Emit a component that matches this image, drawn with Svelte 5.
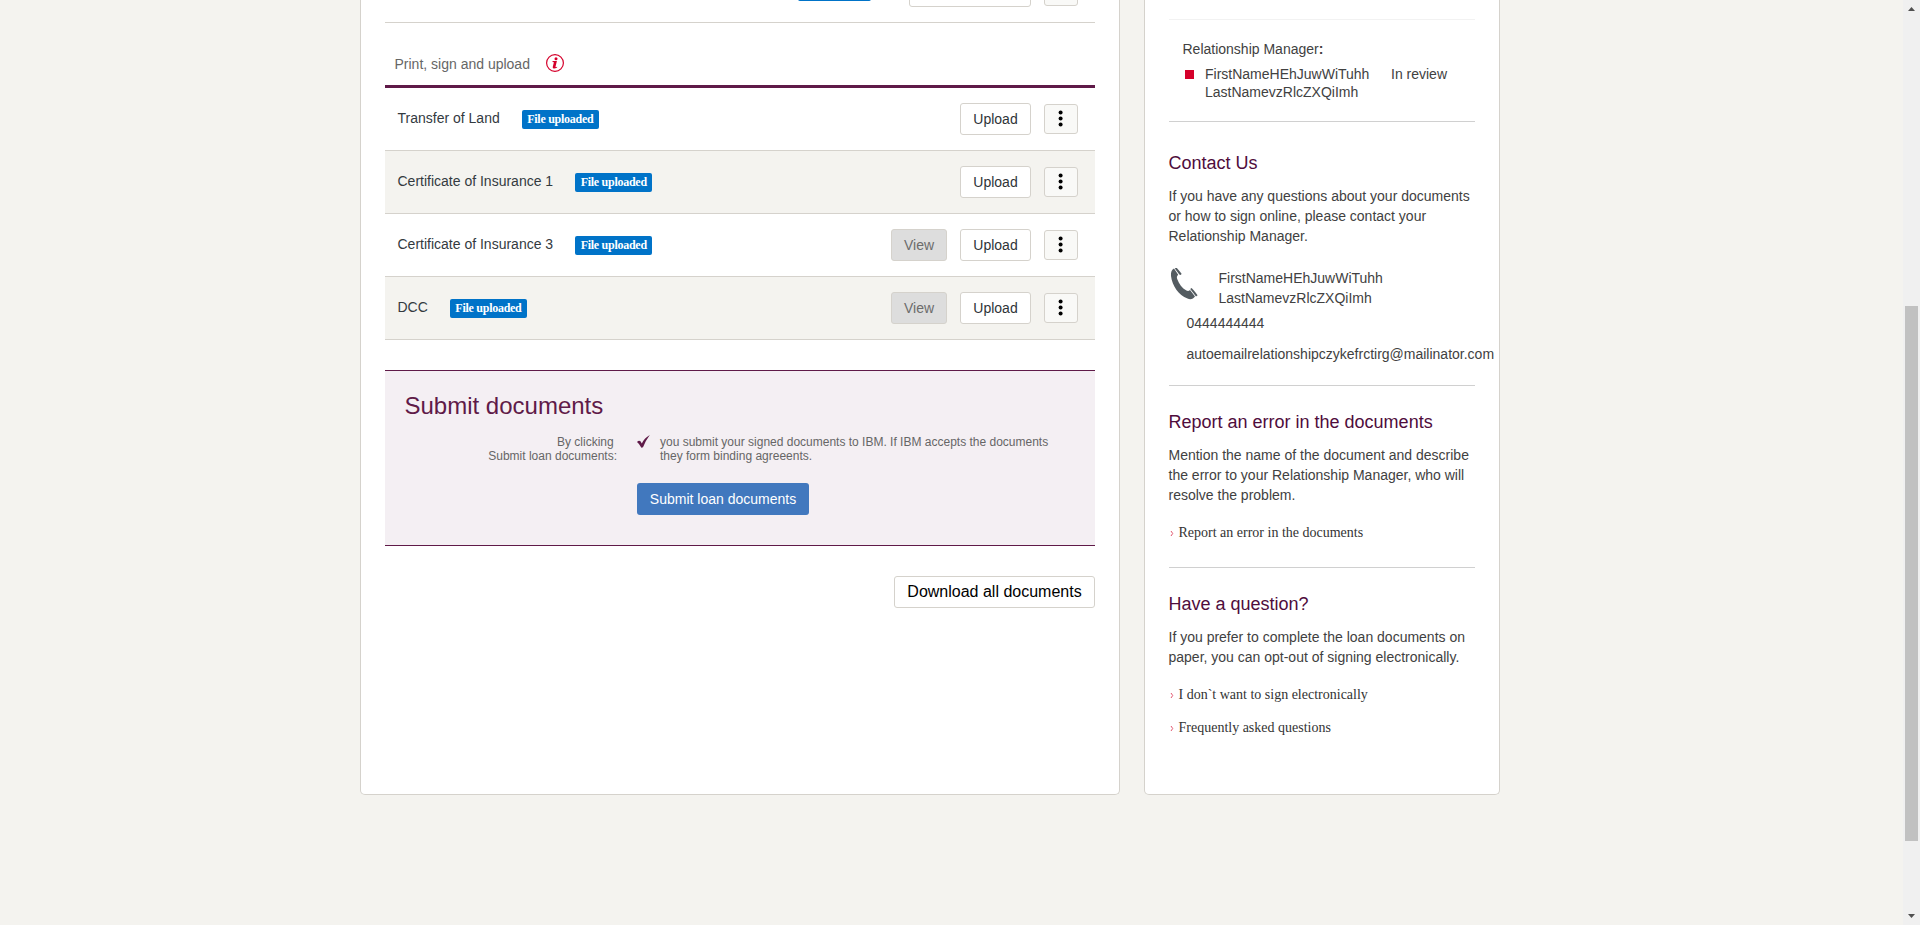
<script>
  const documents = [
    { name: 'Transfer of Land', view: false },
    { name: 'Certificate of Insurance 1', view: false },
    { name: 'Certificate of Insurance 3', view: true },
    { name: 'DCC', view: true }
  ];
</script>

{#snippet more()}
  <button class="more" aria-label="More">
    <svg width="6" height="18" viewBox="0 0 6 18">
      <circle cx="2.6" cy="2.5" r="2" /><circle cx="2.6" cy="8.4" r="2" /><circle cx="2.6" cy="14.4" r="2" />
    </svg>
  </button>
{/snippet}

{#snippet link(label)}
  <a class="link" href="#top">
    <svg width="10" height="20" viewBox="0 0 10 20"><path d="M2 8 L3.7 10.5 L2 13" /></svg><span>{label}</span>
  </a>
{/snippet}

<div class="page">
  <div class="body">
    <main class="panel left">
      <div class="partial">
        <span class="stub"></span>
        <button class="btn wide" aria-label="Sign"></button>
        {@render more()}
      </div>

      <div class="group-title">
        <span>Print, sign and upload</span>
        <svg width="18" height="18" viewBox="0 0 18 18">
          <circle cx="9" cy="9" r="8.4" fill="none" stroke="#d5002b" stroke-width="1.2" />
          <circle cx="10" cy="4.7" r="1.5" fill="#d5002b" />
          <path d="M6.6 7 H10.9 L9.5 12.8 Q9.5 13.5 11.2 12.7 L11.1 13.5 Q9 14.8 7.6 14.5 Q6.4 14.1 6.8 12.7 L7.9 8.2 L6.5 7.9 Z" fill="#d5002b" />
        </svg>
      </div>

      {#each documents as doc, i}
        <div class="row" class:shaded={i % 2 === 1}>
          <span class="name">{doc.name}</span>
          <span class="badge">File uploaded</span>
          <div class="actions">
            {#if doc.view}<button class="btn view">View</button>{/if}
            <button class="btn upload">Upload</button>
            {@render more()}
          </div>
        </div>
      {/each}

      <section class="submit">
        <h2>Submit documents</h2>
        <div class="terms">
          <div class="label">By clicking&nbsp;<br />Submit loan documents:</div>
          <svg width="13" height="14" viewBox="0 0 13 14">
            <path d="M0 7 Q1.8 5 3.5 6.2 L4.8 8.4 Q7.5 3 12.8 0 Q8.6 5.6 6 12.2 L4.4 12.8 Q2.6 9 0 7 Z" fill="#5f1a48" />
          </svg>
          <div class="note">you submit your signed documents to IBM. If IBM accepts the documents<br />they form binding agreeents.</div>
        </div>
        <button class="primary">Submit loan documents</button>
      </section>

      <button class="btn download">Download all documents</button>
    </main>

    <aside class="panel right">
      <div class="sec top"></div>
      <div class="sec manager">
        <div>Relationship Manager<b>:</b></div>
        <div class="status">
          <i></i>
          <span class="who">FirstNameHEhJuwWiTuhh LastNamevzRlcZXQiImh</span>
          <span>In review</span>
        </div>
      </div>

      <div class="sec contact">
        <h3>Contact Us</h3>
        <p>If you have any questions about your documents or how to sign online, please contact your Relationship Manager.</p>
        <div class="person">
          <svg width="31" height="34" viewBox="-1 1 31 34">
            <path d="M1 9 C0.6 5 2 2.5 4 1.6 L8.2 7.8 C6.8 9.2 6.6 10 7.2 12 C9 17 12 21 16.4 23.6 C18 24.4 19 24 20 23 L25 29.6 C23.4 32 20.5 32.8 17.5 31.6 C8.5 28 2.3 19 1 9 Z" fill="#545c61" />
            <path d="M4.8 1.4 L6.4 0.6 Q8.6 2.8 11.6 6.8 Q11.2 8.6 9.3 7.6 Z" fill="#545c61" />
            <path d="M20.2 21.9 L21.6 21 Q25 24.4 27.6 28.2 L26 29.6 Z" fill="#545c61" />
          </svg>
          <span>FirstNameHEhJuwWiTuhh<br />LastNamevzRlcZXQiImh</span>
        </div>
        <div class="phone">0444444444</div>
        <div class="email">autoemailrelationshipczykefrctirg@mailinator.com</div>
      </div>

      <div class="sec report">
        <h3>Report an error in the documents</h3>
        <p>Mention the name of the document and describe the error to your Relationship Manager, who will resolve the problem.</p>
        {@render link('Report an error in the documents')}
      </div>

      <div class="sec question">
        <h3>Have a question?</h3>
        <p>If you prefer to complete the loan documents on paper, you can opt-out of signing electronically.</p>
        {@render link('I don`t want to sign electronically')}
        {@render link('Frequently asked questions')}
      </div>
    </aside>
  </div>

  <div class="scrollbar">
    <svg width="7" height="4" viewBox="0 0 7 4"><path d="M0 4 L3.5 0 L7 4 Z" /></svg>
    <div class="thumb"></div>
    <svg width="7" height="4" viewBox="0 0 7 4"><path d="M0 0 L3.5 4 L7 0 Z" /></svg>
  </div>
</div>

<style>
  :global(body) { margin: 0; }
  * { box-sizing: border-box; }
  .page {
    display: flex;
    height: 925px;
    overflow: hidden;
    background: #f4f3ef;
    font: 14px/20px "Liberation Sans", Arial, sans-serif;
    color: #414141;
  }
  .body { flex: 1; display: flex; align-items: flex-start; gap: 24px; padding-left: 360px; }
  .panel {
    height: 795px;
    background: #fff;
    border: 1px solid #d5d2cc;
    border-top: 0;
    border-radius: 0 0 5px 5px;
    padding: 0 24px;
  }
  .left { width: 760px; display: flex; flex-direction: column; }
  .right { width: 356px; }
  button { font: inherit; padding: 0; margin: 0; }

  .partial {
    height: 23px;
    flex: none;
    border-bottom: 1px solid #d5d2cc;
    display: flex;
    justify-content: flex-end;
    align-items: flex-start;
    padding-right: 17px;
    overflow: hidden;
  }
  .stub { width: 73px; height: 19px; margin: -18px 38px 0 0; background: #0073c8; border-radius: 2px; }
  .btn {
    height: 32px;
    border: 1px solid #d5d2cc;
    border-radius: 3px;
    background: #fff;
    color: #2e3438;
  }
  .wide { width: 122px; margin: -25px 13px 0 0; }
  .more {
    width: 34px;
    height: 30px;
    border: 1px solid #d5d2cc;
    border-radius: 3px;
    background: #f9f9f7;
    display: flex;
    justify-content: center;
    align-items: center;
  }
  .partial .more { margin-top: -24px; }

  .group-title {
    height: 65px;
    flex: none;
    border-bottom: 3px solid #5f1a48;
    padding: 31px 0 0 9.5px;
    display: flex;
    align-items: flex-start;
    gap: 16.5px;
    color: #666;
  }
  .group-title svg { display: block; }

  .row {
    height: 63px;
    flex: none;
    border-bottom: 1px solid #d5d2cc;
    display: flex;
    align-items: flex-start;
    gap: 22px;
    padding: 15px 17px 0 12.5px;
    color: #333a3f;
  }
  .shaded { background: #f4f3ef; }
  .name { margin-top: 5px; }
  .badge {
    margin-top: 7px;
    height: 19px;
    padding: 0 5.2px 0 5.5px;
    border-radius: 2px;
    background: #0073c8;
    color: #fff;
    font: bold 12px/18px "Liberation Serif", "Times New Roman", serif;
    letter-spacing: -0.27px;
  }
  .actions { margin-left: auto; display: flex; align-items: center; gap: 13px; }
  .upload { width: 71px; }
  .view { width: 56px; background: #ddd; color: #6c6c6c; }

  .submit {
    flex: none;
    margin-top: 30px;
    height: 176px;
    border: solid #5f1a48;
    border-width: 1px 0;
    background: #f4eff3;
    padding: 21px 20px 0 19.5px;
    color: #666;
  }
  h2 { margin: 0; font: 24px/28px "Liberation Sans", Arial, sans-serif; color: #5f1a48; }
  .terms { display: flex; margin-top: 15px; font-size: 12px; line-height: 14px; }
  .label { width: 212.5px; text-align: right; margin-right: 20px; }
  .note { margin-left: 10px; white-space: nowrap; }
  .primary {
    display: block;
    margin: 20px 0 0 232.5px;
    width: 172px;
    height: 32px;
    border: 0;
    border-radius: 3px;
    background: #4178be;
    color: #fff;
  }
  .download { align-self: flex-end; flex: none; margin-top: 30px; width: 201px; font-size: 16px; color: #000; }

  .sec { border-bottom: 1px solid #d0d0d0; }
  .top { height: 20px; border-color: #f2f2f2; }
  .manager { height: 102px; padding: 20px 0 0 13.5px; line-height: 18px; }
  .status { display: flex; margin-top: 7px; }
  .status i { width: 9px; height: 9px; margin: 5px 11px 0 2.5px; background: #d5002b; }
  .who { width: 186px; padding-right: 10px; }
  h3 { margin: 0 0 12px -0.5px; font: 18px/22px "Liberation Sans", Arial, sans-serif; color: #4f0d3c; }
  p { margin: 0 0 0 -0.5px; }
  .contact { height: 264px; padding-top: 30px; }
  .person { display: flex; margin-top: 22px; gap: 18.5px; }
  .person svg { display: block; }
  .phone { margin: 0 0 0 17.5px; }
  .person { height: 45px; }
  .email { margin: 11px 0 0 17.5px; white-space: nowrap; }
  .report { height: 182px; padding-top: 25px; }
  .question { padding-top: 25px; border: 0; }
  .link {
    display: flex;
    margin: 18px 0 0 -0.5px;
    color: #333;
    text-decoration: none;
    font: 14px/20px "Liberation Serif", "Times New Roman", serif;
  }
  .link + .link { margin-top: 13px; }
  .link path { fill: none; stroke: #e2566f; stroke-width: 1; }

  .scrollbar {
    width: 17px;
    background: #f0f0f0;
    display: flex;
    flex-direction: column;
    align-items: center;
    padding: 7px 0;
    justify-content: space-between;
  }
  .scrollbar path { fill: #505050; }
  .thumb { width: 13px; height: 535px; margin-top: 222px; background: #c1c1c1; }
</style>
